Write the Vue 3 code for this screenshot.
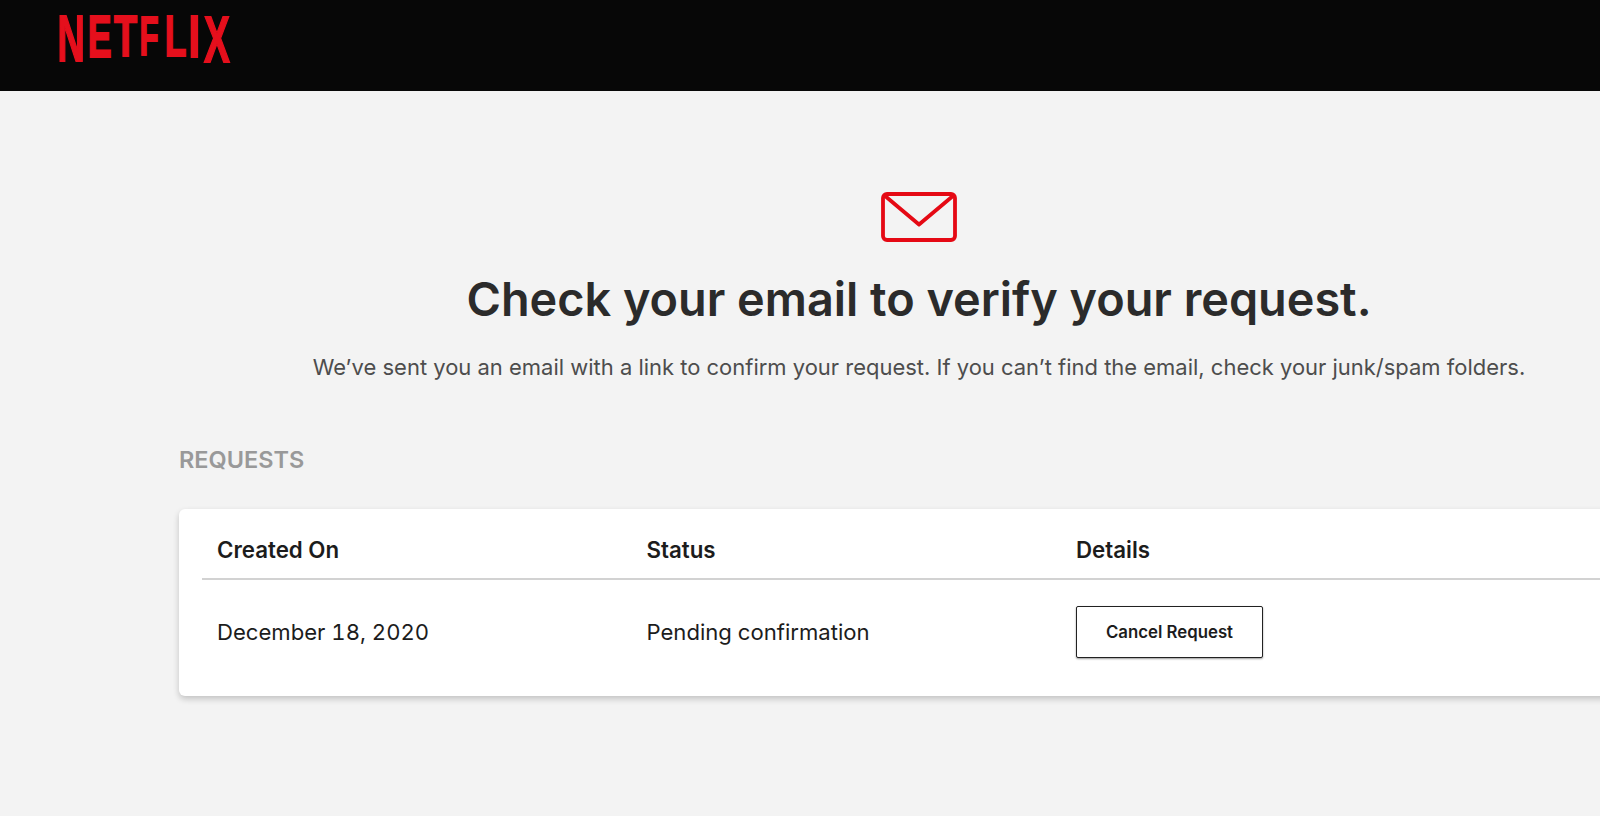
<script setup>
const logoLetters = [
    { char: "N", width: 24, height: 46, scale: 0.59, gap: 0 },
    { char: "E", width: 21, height: 42, scale: 0.61, gap: 6 },
    { char: "T", width: 23, height: 41, scale: 0.66, gap: 4 },
    { char: "F", width: 17, height: 40, scale: 0.56, gap: 4 },
    { char: "L", width: 20, height: 41, scale: 0.62, gap: 7 },
    { char: "I", width: 7, height: 43, scale: 0.71, gap: 6 },
    { char: "X", width: 27, height: 47, scale: 0.59, gap: 5 },
];

function letterStyle(letter) {
    return {
        width: `${letter.width}px`,
        height: `${letter.height}px`,
        marginLeft: `${letter.gap}px`,
        fontSize: `${letter.height / 0.716}px`,
    };
}
</script>

<template>
    <div class="page">
        <header class="topbar">
            <div class="logo" aria-label="Netflix">
                <span v-for="letter in logoLetters" :key="letter.char" class="logo__letter" :style="letterStyle(letter)">
                    <span class="logo__glyph" :style="{ transform: `scaleX(${letter.scale})` }">{{ letter.char }}</span>
                </span>
            </div>
        </header>

        <main class="content">
            <section class="notice">
                <svg class="notice__icon" width="76" height="50" viewBox="0 0 76 50" fill="none" stroke="#e50914" stroke-width="3.8" stroke-linejoin="round" aria-hidden="true">
                    <rect x="2" y="2" width="72" height="46" rx="4" />
                    <path d="M3.5 3.5 L38 32.5 L72.5 3.5" />
                </svg>
                <h1 class="notice__title">Check your email to verify your request.</h1>
                <p class="notice__text">We’ve sent you an email with a link to confirm your request. If you can’t find the email, check your junk/spam folders.</p>
            </section>

            <h2 class="requests-label">REQUESTS</h2>

            <section class="card">
                <div class="card__row card__row--head">
                    <div>Created On</div>
                    <div>Status</div>
                    <div>Details</div>
                </div>
                <div class="card__row card__row--body">
                    <div>December 18, 2020</div>
                    <div>Pending confirmation</div>
                    <div><button class="cancel" type="button">Cancel Request</button></div>
                </div>
            </section>
        </main>
    </div>
</template>

<style>
html,
body {
    margin: 0;
    background: #f3f3f3;
    overflow: hidden;
}
</style>

<style scoped>
.page {
    height: 816px;
    overflow: hidden;
    background: #f3f3f3;
    font-family: Inter, "Noto Sans", sans-serif;
}

.topbar {
    height: 91px;
    box-sizing: border-box;
    background: #070707;
    padding: 16px 0 0 59px;
}

.logo {
    display: flex;
    align-items: flex-start;
    height: 47px;
}

.logo__letter {
    display: flex;
    align-items: center;
    justify-content: center;
    line-height: 1;
    color: #e50f1c;
    font-family: "Liberation Sans", sans-serif;
    font-weight: 700;
    -webkit-text-stroke: 1.8px #e50f1c;
}

.logo__glyph {
    display: inline-block;
}

.content {
    width: 1480px;
    margin-left: 179px;
}

.notice {
    display: flex;
    flex-direction: column;
    align-items: center;
    padding-top: 101px;
}

.notice__title {
    margin: 27px 0 0;
    font-size: 46.8px;
    line-height: 60px;
    font-weight: 600;
    color: #2b2b2b;
    white-space: nowrap;
}

.notice__text {
    margin: 24px 0 0;
    font-size: 21.97px;
    line-height: 28px;
    color: #4d4d4d;
    white-space: nowrap;
}

.requests-label {
    margin: 65px 0 0;
    font-size: 23.5px;
    line-height: 28px;
    font-weight: 600;
    color: #999;
}

.card {
    margin-top: 35px;
    height: 187px;
    background: #fff;
    border-radius: 6px 0 0 6px;
    box-shadow: 0 3px 6px rgba(0, 0, 0, 0.2);
    padding-left: 23px;
    box-sizing: border-box;
}

.card__row {
    display: grid;
    grid-template-columns: 429.5px 429.5px 1fr;
    padding-left: 15px;
    line-height: 28px;
    color: #1c1c1c;
}

.card__row--head {
    box-sizing: border-box;
    height: 71px;
    padding-bottom: 14px;
    align-items: end;
    font-size: 22.3px;
    font-weight: 600;
    border-bottom: 2px solid #d2d2d2;
}

.card__row--body {
    height: 104px;
    box-sizing: border-box;
    align-items: center;
    font-size: 22.1px;
    font-variant-numeric: tabular-nums;
}

.cancel {
    display: block;
    width: 187px;
    height: 52px;
    background: #fff;
    border: 1px solid #222;
    border-radius: 2px;
    box-shadow: 0 1px 2px rgba(0, 0, 0, 0.4);
    font-family: inherit;
    font-size: 16.8px;
    font-weight: 600;
    color: #1c1c1c;
}
</style>
